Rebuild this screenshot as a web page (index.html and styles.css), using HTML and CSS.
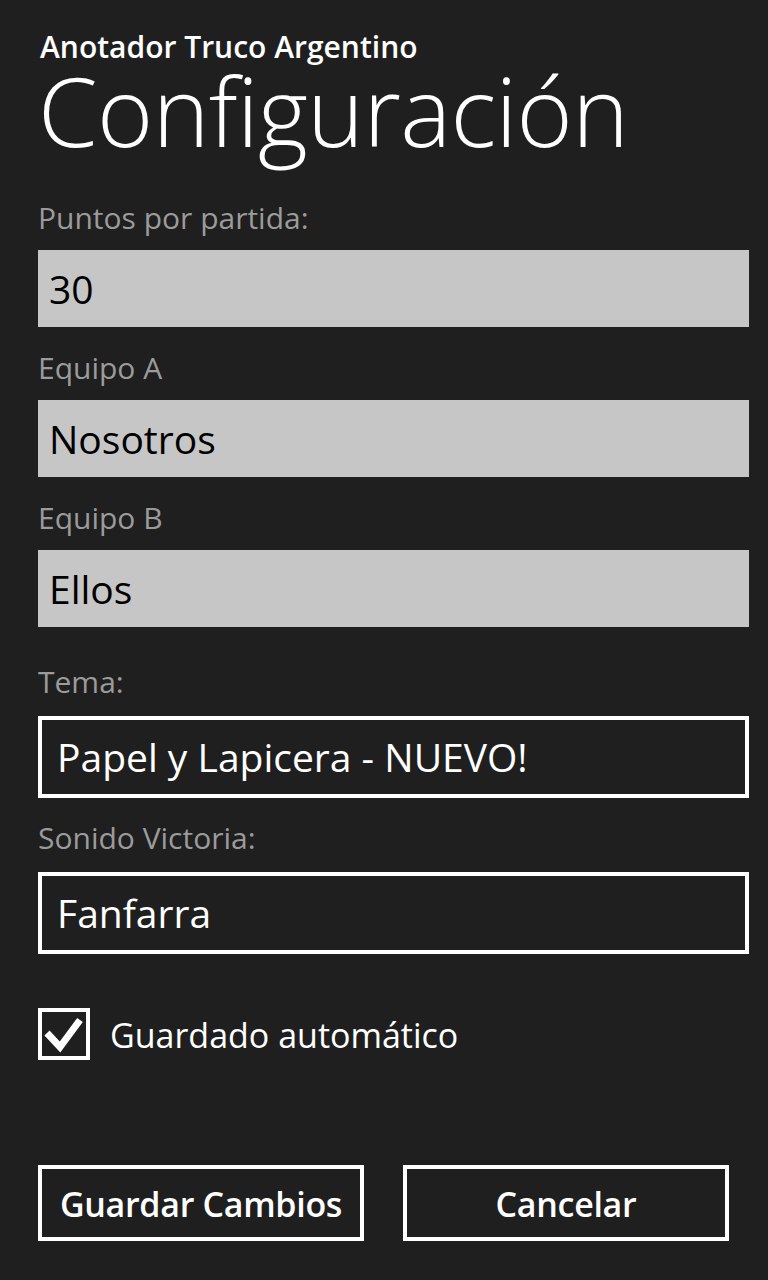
FILE: index.html
```html
<!DOCTYPE html>
<html lang="es">
<head>
<meta charset="utf-8">
<title>Configuración</title>
<link rel="stylesheet" href="styles.css">
</head>
<body>
<div class="page">
  <header class="header">
    <div class="app-title">Anotador Truco Argentino</div>
    <h1 class="page-title">Configuración</h1>
  </header>

  <main class="form">
    <div class="field">
      <div class="label">Puntos por partida:</div>
      <div class="textbox">30</div>
    </div>
    <div class="field">
      <div class="label">Equipo A</div>
      <div class="textbox">Nosotros</div>
    </div>
    <div class="field">
      <div class="label">Equipo B</div>
      <div class="textbox">Ellos</div>
    </div>
    <div class="field field-picker field-section-start">
      <div class="label">Tema:</div>
      <div class="picker">Papel y Lapicera - NUEVO!</div>
    </div>
    <div class="field field-picker">
      <div class="label">Sonido Victoria:</div>
      <div class="picker">Fanfarra</div>
    </div>

    <div class="checkbox-row">
      <div class="checkbox">
        <svg width="44" height="44" viewBox="0 0 44 44" aria-hidden="true">
          <path d="M5 21 L18 35 L38 8" fill="none" stroke="#fff" stroke-width="7" stroke-linecap="butt" stroke-linejoin="miter"/>
        </svg>
      </div>
      <span class="checkbox-label">Guardado automático</span>
    </div>
  </main>

  <div class="buttons">
    <div class="button">Guardar Cambios</div>
    <div class="button">Cancelar</div>
  </div>
</div>
</body>
</html>
```

FILE: styles.css
```css
html, body {
  margin: 0;
  padding: 0;
  background: #1f1f1f;
}

body {
  font-family: "Open Sans", "Noto Sans", "Liberation Sans", sans-serif;
  color: #ffffff;
  width: 768px;
  height: 1280px;
  overflow: hidden;
}

.page {
  padding: 0 19px 0 38px;
}

.header {
  padding-top: 29px;
}

.app-title {
  font-size: 30px;
  line-height: 36px;
  font-weight: 600;
  padding-left: 2px;
}

.page-title {
  margin: 5px 0 0;
  font-size: 96px;
  line-height: 80px;
  font-weight: 300;
  letter-spacing: -0.6px;
}

.form {
  margin-top: 50px;
}

.field {
  margin-bottom: 23px;
}

.label {
  font-size: 30px;
  line-height: 36px;
  color: #9b9b9b;
  margin-bottom: 14px;
}

.textbox {
  height: 77px;
  background: #c6c6c6;
  color: #000;
  font-size: 39px;
  line-height: 77px;
  padding-left: 11px;
  box-sizing: border-box;
}

.field-section-start {
  margin-top: 37px;
}

.field-picker {
  margin-bottom: 22px;
}

.field-picker .label {
  margin-bottom: 16px;
}

.picker {
  height: 82px;
  border: 4px solid #fff;
  box-sizing: border-box;
  font-size: 39px;
  line-height: 74px;
  padding-left: 15px;
  color: #fff;
}

.checkbox-row {
  display: flex;
  align-items: center;
  margin-top: 54px;
}

.checkbox {
  width: 52px;
  height: 52px;
  border: 4px solid #fff;
  box-sizing: border-box;
  display: flex;
  align-items: center;
  justify-content: center;
}

.checkbox-label {
  margin-left: 20px;
  font-size: 34px;
  line-height: 52px;
  position: relative;
  top: 1px;
}

.buttons {
  display: grid;
  grid-template-columns: 1fr 1fr;
  column-gap: 39px;
  margin-top: 105px;
  margin-right: 20px;
}

.button {
  height: 76px;
  border: 4px solid #fff;
  box-sizing: border-box;
  display: flex;
  align-items: center;
  justify-content: center;
  font-size: 34px;
  font-weight: 600;
  letter-spacing: -0.3px;
  padding-top: 2px;
}
```
